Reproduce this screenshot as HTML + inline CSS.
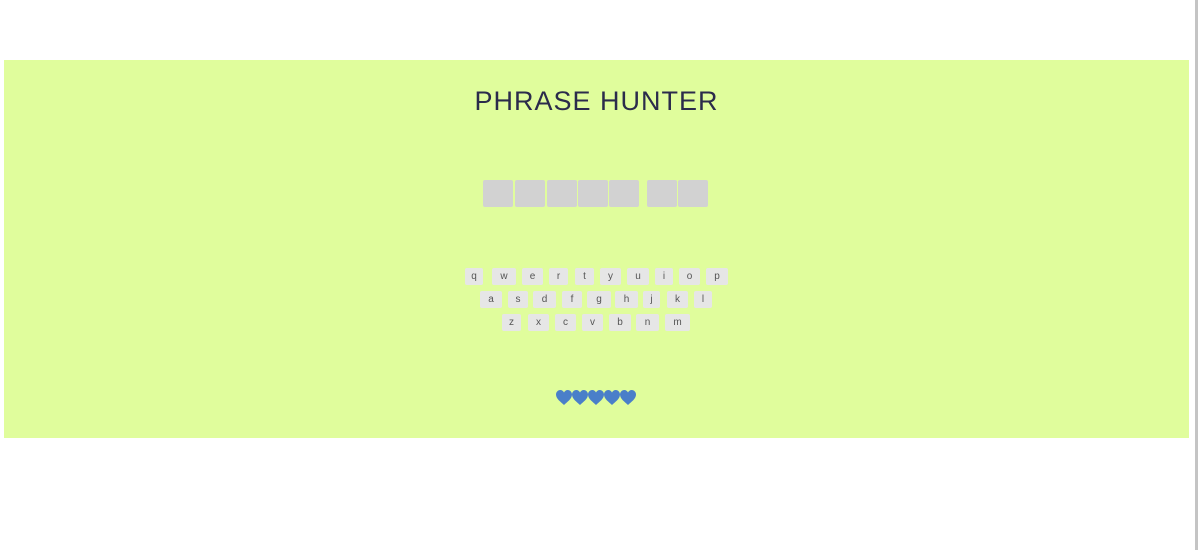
<!DOCTYPE html>
<html><head><style>
body{margin:0;width:1200px;height:550px;background:#fff;position:relative;overflow:hidden;font-family:"Liberation Sans",sans-serif}
#band{position:absolute;left:4px;top:60px;width:1185px;height:378px;background:#e0fd9c}
#sb{position:absolute;left:1195px;top:0;width:3px;height:550px;background:#c4c4c4}
h1{position:absolute;left:0;width:1193px;top:86px;margin:0;text-align:center;font-weight:400;font-size:27px;color:#2b2b4b;letter-spacing:1px}
.b{position:absolute;top:180px;width:30px;height:27px;background:#d2d2d2;border-radius:2px}
.k{position:absolute;height:17px;background:#e6e6e6;border-radius:2px;font-size:10px;color:#555;text-align:center;line-height:17px}
</style></head><body>
<div id="band"></div><div id="sb"></div>
<h1>PHRASE HUNTER</h1>
<div class="b" style="left:483px"></div><div class="b" style="left:515px"></div><div class="b" style="left:547px"></div><div class="b" style="left:578px"></div><div class="b" style="left:609px"></div><div class="b" style="left:647px"></div><div class="b" style="left:678px"></div>
<div class="k" style="top:268px;left:465px;width:18px">q</div>
<div class="k" style="top:268px;left:492px;width:24px">w</div>
<div class="k" style="top:268px;left:522px;width:21px">e</div>
<div class="k" style="top:268px;left:549px;width:19px">r</div>
<div class="k" style="top:268px;left:575px;width:19px">t</div>
<div class="k" style="top:268px;left:600px;width:21px">y</div>
<div class="k" style="top:268px;left:627px;width:22px">u</div>
<div class="k" style="top:268px;left:655px;width:18px">i</div>
<div class="k" style="top:268px;left:679px;width:21px">o</div>
<div class="k" style="top:268px;left:706px;width:22px">p</div>
<div class="k" style="top:291px;left:480px;width:22px">a</div>
<div class="k" style="top:291px;left:508px;width:20px">s</div>
<div class="k" style="top:291px;left:533px;width:23px">d</div>
<div class="k" style="top:291px;left:562px;width:20px">f</div>
<div class="k" style="top:291px;left:587px;width:24px">g</div>
<div class="k" style="top:291px;left:615px;width:23px">h</div>
<div class="k" style="top:291px;left:643px;width:17px">j</div>
<div class="k" style="top:291px;left:667px;width:21px">k</div>
<div class="k" style="top:291px;left:694px;width:18px">l</div>
<div class="k" style="top:314px;left:502px;width:19px">z</div>
<div class="k" style="top:314px;left:528px;width:21px">x</div>
<div class="k" style="top:314px;left:555px;width:21px">c</div>
<div class="k" style="top:314px;left:582px;width:21px">v</div>
<div class="k" style="top:314px;left:609px;width:22px">b</div>
<div class="k" style="top:314px;left:636px;width:23px">n</div>
<div class="k" style="top:314px;left:665px;width:25px">m</div>
<svg style="position:absolute;left:556px;top:390px" width="82" height="16" viewBox="0 0 82 16">
<defs><path id="h" d="M8 15 C5 12 0 9 0 4.5 C0 2 2 0 4.2 0 C6 0 7.3 1 8 2.5 C8.7 1 10 0 11.8 0 C14 0 16 2 16 4.5 C16 9 11 12 8 15Z" fill="#4a7fc9"/></defs>
<use href="#h" x="0"/><use href="#h" x="16"/><use href="#h" x="32"/><use href="#h" x="48"/><use href="#h" x="64"/>
</svg>
</body></html>
